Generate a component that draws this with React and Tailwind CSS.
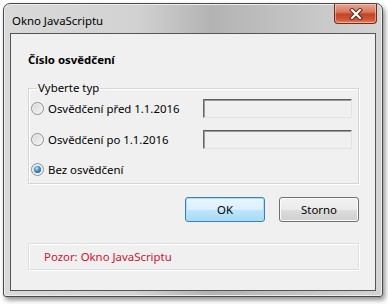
import React from "react"

function Radio({ checked }) {
  return (
    <span className="flex h-[13px] w-[13px] shrink-0 items-center justify-center rounded-full border border-[#8f8f8f] bg-[linear-gradient(135deg,#d4d4d4,#f7f7f7)] shadow-[inset_0_0_0_1px_#f4f4f4]">
      {checked && (
        <span className="h-[7px] w-[7px] rounded-full bg-[radial-gradient(circle_at_40%_35%,#bfe4fb_0%,#3b8bc8_45%,#174a78_100%)]" />
      )}
    </span>
  )
}

function TextField() {
  return (
    <div className="h-[19px] w-[149px] border border-t-[#5f5f5f] border-l-[#6a6a6a] border-r-[#e2e2e2] border-b-[#e2e2e2] bg-[#f0f0f0] shadow-[inset_1px_1px_0_#9a9a9a]" />
  )
}

function CloseButton() {
  return (
    <div className="flex h-[20px] w-[43px] items-center justify-center rounded-b-[4px] border border-t-0 border-[#6e2c1f] bg-[linear-gradient(to_bottom,#e9a692_0%,#d97a62_40%,#c4432a_55%,#d35a3c_85%,#e58b6a_100%)] shadow-[inset_0_0_0_1px_rgba(255,220,200,0.5)]">
      <svg width="14" height="12" viewBox="0 0 14 12">
        <path d="M3 2 L11 10 M11 2 L3 10" stroke="#5a2015" strokeWidth="4" strokeLinecap="square" />
        <path d="M3 2 L11 10 M11 2 L3 10" stroke="#ffffff" strokeWidth="2.2" strokeLinecap="square" />
      </svg>
    </div>
  )
}

export default function App() {
  return (
    <div className="h-[304px] w-[388px] overflow-hidden bg-white pl-[3px] pt-[3px] font-['Noto_Sans','Open_Sans',sans-serif] text-[11.4px] leading-[16px] text-black">
      <div className="flex h-[294px] w-[380px] flex-col rounded-t-[7px] rounded-b-[3px] border border-[#4a4a4a] bg-[linear-gradient(to_right,#d9d9d9_0%,#d2d2d2_35%,#b3b3b3_55%,#c2c2c2_75%,#d4d4d4_100%)] shadow-[2px_3px_5px_rgba(0,0,0,0.45),inset_0_0_0_1px_#eeeeee]">
        {/* title bar */}
        <div className="flex h-[29px] items-start justify-between pl-[8px] pr-[5px]">
          <span className="mt-[9px]">Okno JavaScriptu</span>
          <CloseButton />
        </div>

        {/* client area */}
        <div className="mx-[6px] mb-[5px] flex-1 border border-[#555555] bg-[#f0f0f0] pl-[17px] pr-[16px] pt-[18px]">
          <div className="font-bold">Číslo osvědčení</div>

          <fieldset className="mt-[12px] border border-[#d5d5d5] pl-[2px] pr-[2px] pb-[4px] shadow-[1px_1px_0_#ffffff,inset_1px_1px_0_#ffffff]">
            <legend className="ml-[6px] px-[1px]">Vyberte typ</legend>

            <div className="mt-[3px] flex h-[19px] items-center">
              <div className="flex w-[172px] items-center gap-[4px]">
                <Radio />
                <span>Osvědčení před 1.1.2016</span>
              </div>
              <TextField />
            </div>

            <div className="mt-[12px] flex h-[19px] items-center">
              <div className="flex w-[172px] items-center gap-[4px]">
                <Radio />
                <span>Osvědčení po 1.1.2016</span>
              </div>
              <TextField />
            </div>

            <div className="mt-[11px] flex h-[19px] items-center gap-[4px]">
              <Radio checked />
              <span>Bez osvědčení</span>
            </div>
          </fieldset>

          <div className="mt-[13px] flex justify-end gap-[14px]">
            <button className="h-[25px] w-[80px] rounded-[3px] border border-[#3c7fb1] bg-[linear-gradient(to_bottom,#eaf6fd_0%,#d9f0fc_50%,#bee6fd_51%,#a7d9f5_100%)] shadow-[inset_0_0_0_1px_#a6e0fb]">
              OK
            </button>
            <button className="h-[25px] w-[80px] rounded-[3px] border border-[#707070] bg-[linear-gradient(to_bottom,#f2f2f2_0%,#ebebeb_50%,#dddddd_51%,#cfcfcf_100%)] shadow-[inset_0_0_0_1px_#fcfcfc]">
              Storno
            </button>
          </div>

          <div className="mt-[21px] flex h-[27px] items-center border border-[#dedede] pl-[15px] text-[#cc1432] shadow-[1px_1px_0_#ffffff,inset_1px_1px_0_#ffffff]">
            Pozor: Okno JavaScriptu
          </div>
        </div>
      </div>
    </div>
  )
}
